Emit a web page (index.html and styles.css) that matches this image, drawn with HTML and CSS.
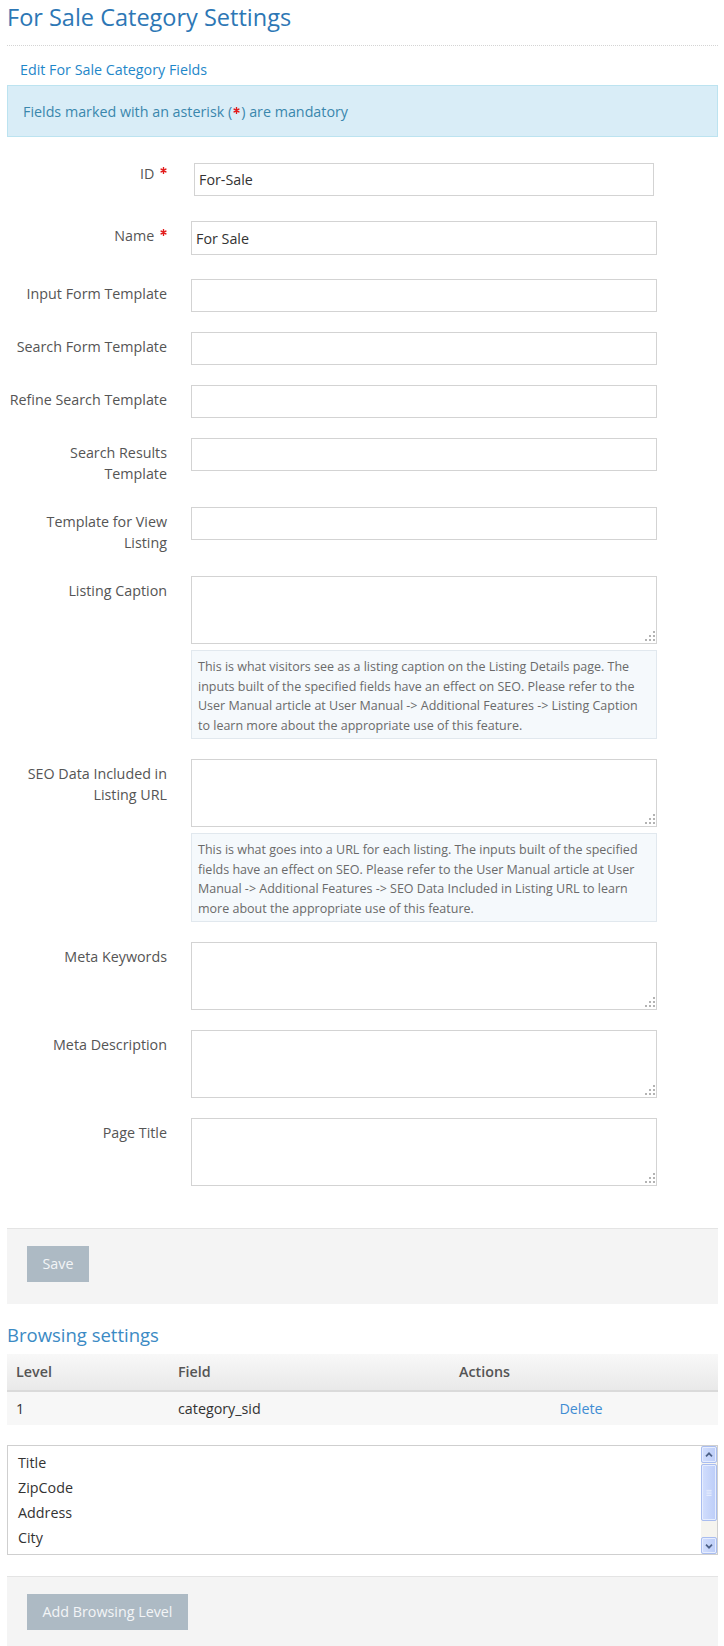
FILE: index.html
```html
<!DOCTYPE html>
<html lang="en">
<head>
<meta charset="utf-8">
<title>For Sale Category Settings</title>
<link rel="stylesheet" href="styles.css">
</head>
<body>
<div class="page">
  <h1 class="page-title">For Sale Category Settings</h1>
  <div class="subnav"><a href="#">Edit For Sale Category Fields</a></div>
  <div class="info">Fields marked with an asterisk (<svg class="star" viewBox="0 0 8 8"><path d="M4 0.8V7.2M1.3 2.4L6.7 5.6M6.7 2.4L1.3 5.6"/></svg>) are mandatory</div>

  <form class="form">
    <div class="row row-req">
      <div class="lbl">ID <svg class="star" viewBox="0 0 8 8"><path d="M4 0.8V7.2M1.3 2.4L6.7 5.6M6.7 2.4L1.3 5.6"/></svg></div>
      <div class="fld"><input class="input input-id" type="text" value="For-Sale"></div>
    </div>
    <div class="row row-req2">
      <div class="lbl">Name <svg class="star" viewBox="0 0 8 8"><path d="M4 0.8V7.2M1.3 2.4L6.7 5.6M6.7 2.4L1.3 5.6"/></svg></div>
      <div class="fld"><input class="input input-tall" type="text" value="For Sale"></div>
    </div>
    <div class="row">
      <div class="lbl">Input Form Template</div>
      <div class="fld"><input class="input" type="text"></div>
    </div>
    <div class="row">
      <div class="lbl">Search Form Template</div>
      <div class="fld"><input class="input" type="text"></div>
    </div>
    <div class="row">
      <div class="lbl">Refine Search Template</div>
      <div class="fld"><input class="input" type="text"></div>
    </div>
    <div class="row">
      <div class="lbl">Search Results Template</div>
      <div class="fld"><input class="input" type="text"></div>
    </div>
    <div class="row">
      <div class="lbl">Template for View Listing</div>
      <div class="fld"><input class="input" type="text"></div>
    </div>
    <div class="row">
      <div class="lbl">Listing Caption</div>
      <div class="fld">
        <div class="ta-wrap"><textarea class="ta"></textarea><svg class="grip" viewBox="0 0 12 12"><rect x="9" y="1" width="2" height="2"/><rect x="5" y="5" width="2" height="2"/><rect x="9" y="5" width="2" height="2"/><rect x="1" y="9" width="2" height="2"/><rect x="5" y="9" width="2" height="2"/><rect x="9" y="9" width="2" height="2"/></svg></div>
        <div class="help">This is what visitors see as a listing caption on the Listing Details page. The inputs built of the specified fields have an effect on SEO. Please refer to the User Manual article at User Manual -&gt; Additional Features -&gt; Listing Caption to learn more about the appropriate use of this feature.</div>
      </div>
    </div>
    <div class="row">
      <div class="lbl">SEO Data Included in Listing URL</div>
      <div class="fld">
        <div class="ta-wrap"><textarea class="ta"></textarea><svg class="grip" viewBox="0 0 12 12"><rect x="9" y="1" width="2" height="2"/><rect x="5" y="5" width="2" height="2"/><rect x="9" y="5" width="2" height="2"/><rect x="1" y="9" width="2" height="2"/><rect x="5" y="9" width="2" height="2"/><rect x="9" y="9" width="2" height="2"/></svg></div>
        <div class="help">This is what goes into a URL for each listing. The inputs built of the specified fields have an effect on SEO. Please refer to the User Manual article at User Manual -&gt; Additional Features -&gt; SEO Data Included in Listing URL to learn more about the appropriate use of this feature.</div>
      </div>
    </div>
    <div class="row">
      <div class="lbl">Meta Keywords</div>
      <div class="fld">
        <div class="ta-wrap"><textarea class="ta"></textarea><svg class="grip" viewBox="0 0 12 12"><rect x="9" y="1" width="2" height="2"/><rect x="5" y="5" width="2" height="2"/><rect x="9" y="5" width="2" height="2"/><rect x="1" y="9" width="2" height="2"/><rect x="5" y="9" width="2" height="2"/><rect x="9" y="9" width="2" height="2"/></svg></div>
      </div>
    </div>
    <div class="row">
      <div class="lbl">Meta Description</div>
      <div class="fld">
        <div class="ta-wrap"><textarea class="ta"></textarea><svg class="grip" viewBox="0 0 12 12"><rect x="9" y="1" width="2" height="2"/><rect x="5" y="5" width="2" height="2"/><rect x="9" y="5" width="2" height="2"/><rect x="1" y="9" width="2" height="2"/><rect x="5" y="9" width="2" height="2"/><rect x="9" y="9" width="2" height="2"/></svg></div>
      </div>
    </div>
    <div class="row">
      <div class="lbl">Page Title</div>
      <div class="fld">
        <div class="ta-wrap"><textarea class="ta"></textarea><svg class="grip" viewBox="0 0 12 12"><rect x="9" y="1" width="2" height="2"/><rect x="5" y="5" width="2" height="2"/><rect x="9" y="5" width="2" height="2"/><rect x="1" y="9" width="2" height="2"/><rect x="5" y="9" width="2" height="2"/><rect x="9" y="9" width="2" height="2"/></svg></div>
      </div>
    </div>
  </form>

  <div class="panel"><button class="btn" type="button">Save</button></div>

  <h2 class="section-title">Browsing settings</h2>
  <table class="grid">
    <thead>
      <tr><th class="c-level">Level</th><th class="c-field">Field</th><th class="c-actions">Actions</th></tr>
    </thead>
    <tbody>
      <tr><td>1</td><td>category_sid</td><td class="td-act"><a href="#">Delete</a></td></tr>
    </tbody>
  </table>

  <div class="listbox">
    <ul class="options">
      <li>Title</li>
      <li>ZipCode</li>
      <li>Address</li>
      <li>City</li>
    </ul>
    <div class="sbar">
      <div class="sb-btn"><svg viewBox="0 0 14 14"><path d="M3.5 8.5L7 5l3.5 3.5"/></svg></div>
      <div class="sb-thumb"><svg viewBox="0 0 14 10"><path d="M4 2.5h6M4 4.5h6M4 6.5h6M4 8.5h6"/></svg></div>
      <div class="sb-track"></div>
      <div class="sb-btn"><svg viewBox="0 0 14 14"><path d="M3.5 5.5L7 9l3.5-3.5"/></svg></div>
    </div>
  </div>

  <div class="panel panel-bottom"><button class="btn" type="button">Add Browsing Level</button></div>
</div>
</body>
</html>
```
FILE: styles.css
```css
* { box-sizing: border-box; }
html, body { margin: 0; padding: 0; background: #fff; }
body {
  font-family: "Open Sans", "DejaVu Sans", sans-serif;
  font-size: 14.3px;
  color: #555;
}
a { text-decoration: none; }
.page { padding: 1px 6px 0 7px; }

.page-title {
  margin: 0;
  font-size: 23.5px;
  font-weight: 400;
  line-height: 32px;
  color: #2d77b5;
  padding-bottom: 12px;
  border-bottom: 1px dotted #d4d4d4;
}
.subnav {
  margin-top: 14px;
  padding-left: 13px;
  line-height: 20px;
}
.subnav a { color: #1f87c9; }

.info {
  margin-top: 5px;
  background: #d9edf7;
  border: 1px solid #bce3f0;
  color: #3a87ad;
  line-height: 20px;
  padding: 16px 15px 14px;
}
.star {
  width: 7px;
  height: 7px;
  vertical-align: 3px;
  margin: 0 1px;
}
.star path { stroke: #e21b1b; stroke-width: 1.7; stroke-linecap: round; fill: none; }

.form { margin-top: 22px; display: flow-root; }
.row { display: flex; align-items: flex-start; margin-bottom: 20px; }
.row-req { margin-bottom: 25px; }
.row-req2 { margin-bottom: 24px; }
.lbl {
  flex: 0 0 160px;
  text-align: right;
  padding: 4px 0 3px;
  line-height: 21px;
  color: #555;
}
.lbl .star { vertical-align: 5px; margin-left: 2px; margin-right: 0; }
.fld { flex: 0 0 466px; margin-left: 24px; }
.input {
  display: block;
  width: 100%;
  height: 33px;
  border: 1px solid #d3d3d3;
  padding: 0 4px;
  font-family: inherit;
  font-size: 14.3px;
  color: #333;
  background: #fff;
  outline: none;
  border-radius: 0;
}
.input-id { width: 460px; margin: 4px 3px 0; }
.input-tall { height: 34px; }

.ta-wrap { position: relative; }
.ta {
  display: block;
  width: 100%;
  height: 68px;
  border: 1px solid #d3d3d3;
  resize: none;
  font-family: inherit;
  font-size: 14.3px;
  outline: none;
  border-radius: 0;
}
.grip {
  position: absolute;
  right: 1px;
  bottom: 2px;
  width: 12px;
  height: 12px;
}
.grip rect { fill: #b3b3b3; }
.help {
  margin-top: 6px;
  background: #f5f9fc;
  border: 1px solid #e1e8ee;
  padding: 6px 6px 3px;
  font-size: 12.5px;
  line-height: 19.5px;
  color: #6a6a6a;
}

.panel {
  margin-top: 22px;
  background: #f4f4f4;
  border-top: 1px solid #e4e4e4;
  padding: 17px 20px 22px;
}
.btn {
  display: inline-block;
  height: 36px;
  padding: 0 15.5px;
  border: 0;
  border-radius: 0;
  background: #adbac4;
  color: #f3f5f7;
  font-family: inherit;
  font-size: 14.3px;
  line-height: 36px;
  vertical-align: top;
}

.section-title {
  margin: 19px 0 7px;
  font-size: 18.5px;
  font-weight: 400;
  line-height: 24px;
  color: #3b8ac4;
}

.grid { width: 100%; border-collapse: collapse; }
.grid th {
  height: 37px;
  padding: 0 9px 2px;
  text-align: left;
  font-weight: 600;
  color: #555;
  background: linear-gradient(#f8f8f8, #e9e9e9);
  border-bottom: 2px solid #dadada;
}
.c-level { width: 162px; }
.c-field { width: 281px; }
.grid td {
  height: 34px;
  padding: 0 9px;
  background: #f7f7f7;
  color: #333;
}
.grid td.td-act { text-align: center; padding-left: 0; padding-right: 6px; }
.td-act a { color: #3f8dd3; }

.listbox {
  margin-top: 20px;
  height: 110px;
  border: 1px solid #cfcfcf;
  display: flex;
  background: #fff;
}
.options {
  flex: 1;
  list-style: none;
  margin: 0;
  padding: 4px 10px 0;
  line-height: 25px;
  color: #333;
}
.sbar {
  flex: 0 0 16px;
  display: flex;
  flex-direction: column;
  background: #f5f4ef;
}
.sb-btn, .sb-thumb {
  border: 1px solid #a9bdf0;
  border-radius: 2px;
  background: linear-gradient(to right, #d2defd, #bccdf8);
  box-shadow: inset 0 0 0 1px #e6edfe;
  display: flex;
  align-items: center;
  justify-content: center;
}
.sb-btn { height: 17px; }
.sb-btn svg { width: 12px; height: 12px; }
.sb-btn path { stroke: #4c6087; stroke-width: 2; fill: none; }
.sb-thumb { height: 57px; margin-top: 1px; }
.sb-thumb svg { width: 12px; height: 9px; }
.sb-thumb path { stroke: #e9effd; stroke-width: 1; fill: none; }
.sb-track { flex: 1; }

.panel-bottom { margin-top: 21px; }
```
